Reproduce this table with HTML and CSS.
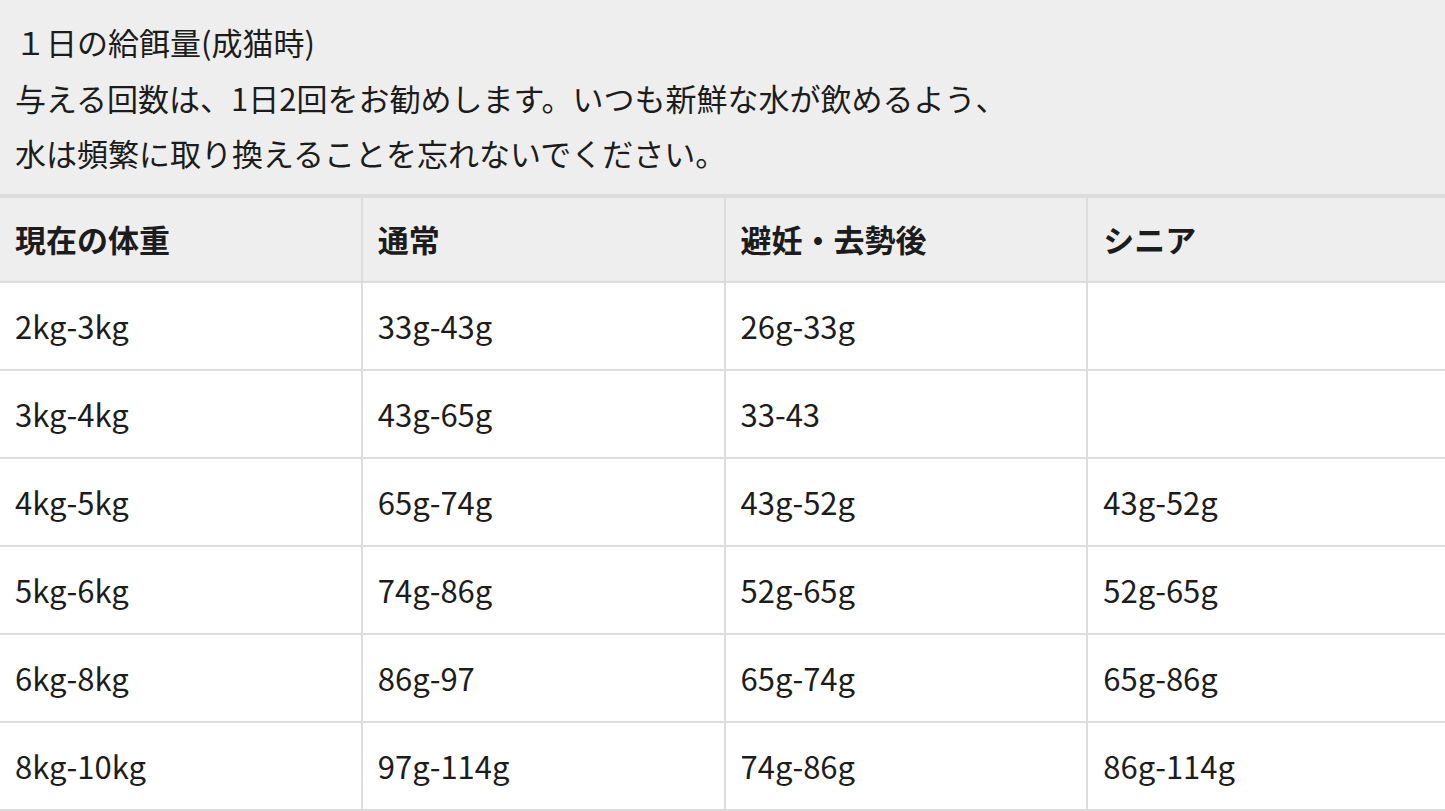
FILE: index.html
```html
<!DOCTYPE html>
<html lang="ja">
<head>
<meta charset="utf-8">
<link rel="stylesheet" href="styles.css">
</head>
<body>
<div class="wrap">
<table class="feed">
<caption class="feed-caption">１日の給餌量(成猫時)<br>与える回数は、1日2回をお勧めします。いつも新鮮な水が飲めるよう、<br>水は頻繁に取り換えることを忘れないでください。</caption>
<thead>
<tr><th>現在の体重</th><th>通常</th><th>避妊・去勢後</th><th>シニア</th></tr>
</thead>
<tbody>
<tr><td>2kg-3kg</td><td>33g-43g</td><td>26g-33g</td><td></td></tr>
<tr><td>3kg-4kg</td><td>43g-65g</td><td>33-43</td><td></td></tr>
<tr><td>4kg-5kg</td><td>65g-74g</td><td>43g-52g</td><td>43g-52g</td></tr>
<tr><td>5kg-6kg</td><td>74g-86g</td><td>52g-65g</td><td>52g-65g</td></tr>
<tr><td>6kg-8kg</td><td>86g-97</td><td>65g-74g</td><td>65g-86g</td></tr>
<tr><td>8kg-10kg</td><td>97g-114g</td><td>74g-86g</td><td>86g-114g</td></tr>
</tbody>
</table>
</div>
</body>
</html>
```
FILE: styles.css
```css
html, body {
  margin: 0;
  padding: 0;
  background: #ffffff;
}
body {
  font-family: "Noto Sans CJK JP", "Noto Sans", sans-serif;
  color: #1c1c1c;
  font-size: 31px;
}
.wrap {
  width: 1445px;
  overflow: hidden;
}
.feed {
  border-collapse: collapse;
  table-layout: fixed;
  width: 1453px;
  margin-left: -2px;
}
.feed-caption {
  caption-side: top;
  text-align: left;
  background: #eeeeee;
  padding: 14px 16px 13px 17px;
  line-height: 55.5px;
  border-bottom: 2px solid #dddddd;
}
.feed th,
.feed td {
  border: 2px solid #dddddd;
  text-align: left;
  padding: 21px 15px;
  line-height: 44px;
  height: 44px;
  font-size: 31px;
}
.feed th {
  background: #eeeeee;
  font-weight: 700;
  padding-top: 19px;
  padding-bottom: 20px;
}
.feed td {
  background: #ffffff;
  font-weight: 400;
}
```
